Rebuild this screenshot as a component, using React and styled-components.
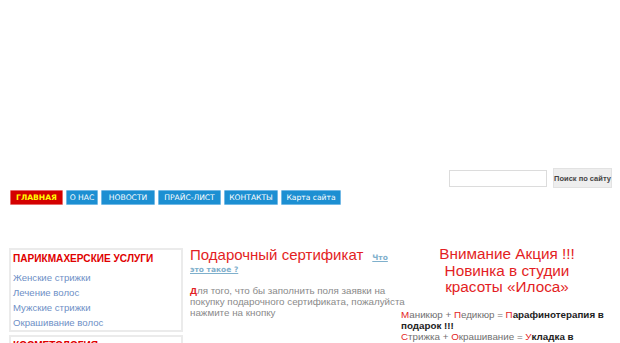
import React from 'react';
import styled, { createGlobalStyle } from 'styled-components';

const Global = createGlobalStyle`
    body {
        margin: 0;
        background: #ffffff;
        font-family: "Liberation Sans", Arial, sans-serif;
    }
`

const Page = styled.div`
    width: 620px;
    height: 343px;
    overflow: hidden;
`
const Header = styled.div`
    height: 167px;
`
const SearchRow = styled.form`
    display: flex;
    justify-content: flex-end;
    align-items: center;
    gap: 6px;
    height: 22px;
    margin: 0;
    padding-right: 8px;
`
const SearchInput = styled.input`
    box-sizing: border-box;
    width: 98px;
    height: 17px;
    border: 1px solid #dcdcdc;
    padding: 0 3px;
    margin: 0;
`
const SearchButton = styled.button`
    box-sizing: border-box;
    width: 59px;
    height: 20px;
    padding: 0;
    margin: 0;
    background: #eeeeee;
    border: 1px solid #e2e2e2;
    font-family: "Liberation Sans", Arial, sans-serif;
    font-weight: bold;
    font-size: 7.5px;
    color: #444;
`
const Nav = styled.div`
    display: flex;
    gap: 3px;
    padding-left: 10px;
    margin-top: 1px;
`
const NavItem = styled.a`
    box-sizing: border-box;
    display: flex;
    align-items: center;
    justify-content: center;
    width: ${p => p.w}px;
    height: 15px;
    font-family: "DejaVu Sans", sans-serif;
    font-size: ${p => (p.active ? '7.6px' : '7.6px')};
    font-weight: ${p => (p.active ? 'bold' : 'normal')};
    color: ${p => (p.active ? '#ffff00' : '#ffffff')};
    background: ${p => (p.active ? '#d40000' : '#1c8fd2')};
    border: 1px solid ${p => (p.active ? '#e86a6a' : '#72b9e6')};
    border-radius: 1px;
    text-decoration: none;
    white-space: nowrap;
`
const Main = styled.div`
    display: flex;
    align-items: flex-start;
    margin-top: 40px;
`
const Sidebar = styled.div`
    width: 174px;
    margin-left: 9px;
    margin-top: 3px;
    display: flex;
    flex-direction: column;
    gap: 3px;
`
const Box = styled.div`
    box-sizing: border-box;
    border: 2px solid #ebebeb;
    padding: 1px 4px 0 2px;
`
const BoxTitle = styled.div`
    color: #e00000;
    font-weight: bold;
    font-size: 10.1px;
    line-height: 16px;
    margin-bottom: 3px;
`
const BoxLink = styled.a`
    display: block;
    color: #6e8fc6;
    font-size: 9.6px;
    line-height: 15px;
    text-decoration: none;
`
const Middle = styled.div`
    width: 211px;
    margin-left: 7px;
`
const Title = styled.div`
    font-size: 8px;
    line-height: 11px;
`
const BigTitle = styled.span`
    color: #e31e24;
    font-size: 15px;
    line-height: 19px;
    margin-right: 9px;
    white-space: nowrap;
`
const WhatLink = styled.a`
    color: #7fb0cc;
    font-weight: bold;
    font-size: 7.5px;
    text-decoration: underline;
    font-family: "DejaVu Sans", sans-serif;
`
const Text = styled.p`
    margin: 10px 0 0;
    color: #8a8a8a;
    font-size: 9.8px;
    line-height: 11px;
    white-space: nowrap;
`
const Red = styled.span`
    color: #e31e24;
    font-weight: ${p => (p.bold ? 'bold' : 'normal')};
`
const Right = styled.div`
    width: 212px;
    margin-top: 1px;
`
const Promo = styled.div`
    color: #e31e24;
    font-size: 15.3px;
    line-height: 16.7px;
    text-align: center;
`
const Offers = styled.div`
    margin-top: 13px;
    color: #707070;
    font-size: 9.8px;
    line-height: 11px;
    white-space: nowrap;
`
const Strong = styled.b`
    color: #222;
`

const menu = [
    { label: 'ГЛАВНАЯ', w: 53, active: true },
    { label: 'О НАС', w: 32 },
    { label: 'НОВОСТИ', w: 54 },
    { label: 'ПРАЙС-ЛИСТ', w: 63 },
    { label: 'КОНТАКТЫ', w: 54 },
    { label: 'Карта сайта', w: 60 },
];

function App() {
    return (
        <Page>
            <Global />
            <Header />
            <SearchRow onSubmit={e => e.preventDefault()}>
                <SearchInput type="text" />
                <SearchButton type="submit">Поиск по сайту</SearchButton>
            </SearchRow>
            <Nav>
                {menu.map(m => (
                    <NavItem key={m.label} w={m.w} active={m.active}>{m.label}</NavItem>
                ))}
            </Nav>
            <Main>
                <Sidebar>
                    <Box>
                        <BoxTitle>ПАРИКМАХЕРСКИЕ УСЛУГИ</BoxTitle>
                        <BoxLink>Женские стрижки</BoxLink>
                        <BoxLink>Лечение волос</BoxLink>
                        <BoxLink>Мужские стрижки</BoxLink>
                        <BoxLink>Окрашивание волос</BoxLink>
                    </Box>
                    <Box>
                        <BoxTitle>КОСМЕТОЛОГИЯ</BoxTitle>
                        <BoxLink>Чистка лица</BoxLink>
                        <BoxLink>Пилинг</BoxLink>
                    </Box>
                </Sidebar>
                <Middle>
                    <Title>
                        <BigTitle>Подарочный сертификат</BigTitle>
                        <WhatLink>Что<br />это такое ?</WhatLink>
                    </Title>
                    <Text>
                        <Red bold>Д</Red>ля того, что бы заполнить поля заявки на<br />
                        покупку подарочного сертификата, пожалуйста<br />
                        нажмите на кнопку
                    </Text>
                </Middle>
                <Right>
                    <Promo>
                        Внимание Акция !!!<br />
                        Новинка в студии<br />
                        красоты «Илоса»
                    </Promo>
                    <Offers>
                        <Red>М</Red>аникюр + <Red>П</Red>едикюр = <Strong><Red>П</Red>арафинотерапия в<br />подарок !!!</Strong><br />
                        <Red>С</Red>трижка + <Red>О</Red>крашивание = <Strong><Red>У</Red>кладка в<br />подарок !!!</Strong>
                    </Offers>
                </Right>
            </Main>
        </Page>
    );
}

export default App;
